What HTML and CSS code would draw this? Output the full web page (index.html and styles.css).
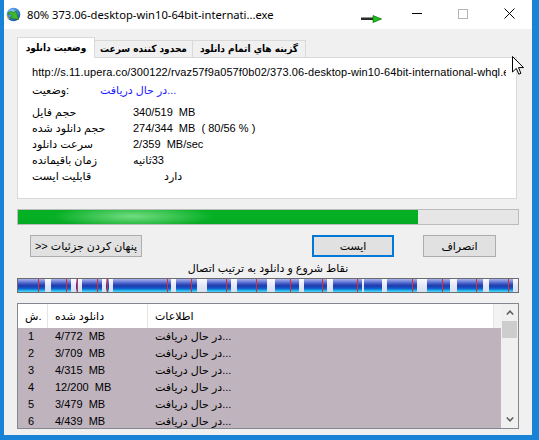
FILE: index.html
```html
<!DOCTYPE html>
<html>
<head>
<meta charset="utf-8">
<link rel="stylesheet" href="styles.css">
</head>
<body>
<div class="window">
  <div class="titlebar">
    <svg class="app-icon" viewBox="0 0 16 16" width="16" height="16">
      <defs>
        <radialGradient id="glb" cx="40%" cy="35%" r="70%">
          <stop offset="0" stop-color="#bfe4ff"/>
          <stop offset="0.5" stop-color="#3d8fe0"/>
          <stop offset="1" stop-color="#174c9e"/>
        </radialGradient>
      </defs>
      <circle cx="7.5" cy="7.5" r="6.8" fill="url(#glb)"/>
      <path d="M2.5 5.5 Q5 3.5 8 5.5 L10 3.8 L12.5 12.5 L4.2 11 L6.4 8.8 Q4.8 7.2 2.6 7.6 Z" fill="#41b82a" stroke="#1f7a12" stroke-width="0.7"/>
      <path d="M1.2 8.5 Q1.5 11 3 12" stroke="#f2a020" stroke-width="1.2" fill="none"/>
    </svg>
    <span class="title">80% 373.06-desktop-win10-64bit-internati...exe</span>
    <svg class="speed" viewBox="0 0 21 8" width="21" height="8">
      <rect x="0" y="2.5" width="14" height="2.5" fill="#2b2b2b"/>
      <polygon points="12,0.5 20.5,4 12,7.5" fill="#18c418" stroke="#0a6a0a" stroke-width="0.7"/>
    </svg>
    <div class="caps">
      <div class="cap"><svg width="10" height="1" viewBox="0 0 10 1"><rect width="10" height="1" fill="#000"/></svg></div>
      <div class="cap"><svg width="10" height="10" viewBox="0 0 10 10"><rect x="0.5" y="0.5" width="9" height="9" fill="none" stroke="#b4b4b4"/></svg></div>
      <div class="cap"><svg width="11" height="11" viewBox="0 0 11 11"><path d="M0.5 0.5 L10.5 10.5 M10.5 0.5 L0.5 10.5" stroke="#000" stroke-width="1"/></svg></div>
    </div>
  </div>

  <div class="client">
    <div class="tabs">
      <div class="tab active t1">وضعیت دانلود</div>
      <div class="tab t2">محدود کننده سرعت</div>
      <div class="tab t3">گزینه هاي اتمام دانلود</div>
    </div>
    <div class="panel">
      <div class="url">http://s.11.upera.co/300122/rvaz57f9a057f0b02/373.06-desktop-win10-64bit-international-whql.exe</div>
      <div class="status"><span class="slbl">وضعیت:</span><span class="sval">در حال دریافت...</span></div>
      <div class="info">
        <div class="lbl">حجم فایل</div><div class="val">340/519&nbsp; MB</div>
        <div class="lbl">حجم دانلود شده</div><div class="val">274/344&nbsp; MB&nbsp; ( 80/56 % )</div>
        <div class="lbl">سرعت دانلود</div><div class="val">2/359&nbsp; MB/sec</div>
        <div class="lbl">زمان باقیمانده</div><div class="val"><span dir="rtl">33ثانیه</span></div>
        <div class="lbl">قابلیت ایست</div><div class="val indent">دارد</div>
      </div>
    </div>

    <div class="progress"><div class="fill" style="width:400px"></div></div>

    <div class="buttons">
      <div class="btn b-hide">&gt;&gt; پنهان کردن جزئیات</div>
      <div class="btn b-stop">ایست</div>
      <div class="btn b-cancel">انصراف</div>
    </div>

    <div class="seglabel">نقاط شروع و دانلود به ترتیب اتصال</div>

    <div class="segbar">
      <i class="gap" style="left:27px;width:6px"></i>
      <i class="gap" style="left:53px;width:5px"></i>
      <i class="gap" style="left:59px;width:5px"></i>
      <i class="gap" style="left:84px;width:4px"></i>
      <i class="gap" style="left:91px;width:4px"></i>
      <i class="gap" style="left:153px;width:5px"></i>
      <i class="gap" style="left:179px;width:10px"></i>
      <i class="gap" style="left:213px;width:6px"></i>
      <i class="gap" style="left:249px;width:8px"></i>
      <i class="gap" style="left:281px;width:5px"></i>
      <i class="gap" style="left:309px;width:6px"></i>
      <i class="gap" style="left:344px;width:2px"></i>
      <i class="gap" style="left:364px;width:5px"></i>
      <i class="gap" style="left:399px;width:10px"></i>
      <i class="gap" style="left:432px;width:7px"></i>
      <i class="gap" style="left:465px;width:6px"></i>
      <i class="gap" style="left:495px;width:5px"></i>
      <i class="red" style="left:20px"></i>
      <i class="red" style="left:48px"></i>
      <i class="red" style="left:59px"></i>
      <i class="red" style="left:79px"></i>
      <i class="red" style="left:89px"></i>
      <i class="red" style="left:149px"></i>
      <i class="red" style="left:173px"></i>
      <i class="red" style="left:208px"></i>
      <i class="red" style="left:238px"></i>
      <i class="red" style="left:272px"></i>
      <i class="red" style="left:304px"></i>
      <i class="red" style="left:339px"></i>
      <i class="red" style="left:394px"></i>
      <i class="red" style="left:424px"></i>
      <i class="red" style="left:458px"></i>
      <i class="red" style="left:490px"></i>
    </div>

    <div class="list">
      <div class="list-main">
        <div class="lhead">
          <div class="c1 hc">ش.</div>
          <div class="c2 hc">دانلود شده</div>
          <div class="c3 hc">اطلاعات</div>
          <div class="hfill"></div>
        </div>
        <div class="lrow"><div class="c1">1</div><div class="c2">4/772&nbsp; MB</div><div class="c3">در حال دریافت...</div></div>
        <div class="lrow"><div class="c1">2</div><div class="c2">3/709&nbsp; MB</div><div class="c3">در حال دریافت...</div></div>
        <div class="lrow"><div class="c1">3</div><div class="c2">4/315&nbsp; MB</div><div class="c3">در حال دریافت...</div></div>
        <div class="lrow"><div class="c1">4</div><div class="c2">12/200&nbsp; MB</div><div class="c3">در حال دریافت...</div></div>
        <div class="lrow"><div class="c1">5</div><div class="c2">3/479&nbsp; MB</div><div class="c3">در حال دریافت...</div></div>
        <div class="lrow"><div class="c1">6</div><div class="c2">4/439&nbsp; MB</div><div class="c3">در حال دریافت...</div></div>
      </div>
      <div class="vscroll">
        <div class="sbtn"><svg width="8" height="5" viewBox="0 0 8 5"><polyline points="0.8,4.5 4,1.2 7.2,4.5" fill="none" stroke="#606060" stroke-width="1.6"/></svg></div>
        <div class="thumb"></div>
        <div class="strack"></div>
        <div class="sbtn"><svg width="8" height="5" viewBox="0 0 8 5"><polyline points="0.8,0.5 4,3.8 7.2,0.5" fill="none" stroke="#606060" stroke-width="1.6"/></svg></div>
      </div>
    </div>
  </div>
</div>
<svg class="cursor" width="12" height="19" viewBox="0 0 12 19">
  <path d="M0.5 0.5 L0.5 16 L4.3 12.4 L6.8 18.2 L8.9 17.3 L6.5 11.6 L11.5 11.6 Z" fill="#fff" stroke="#000" stroke-width="1"/>
</svg>
</body>
</html>
```
FILE: styles.css
```css
* { box-sizing: border-box; }
html, body { margin: 0; padding: 0; }
body {
  width: 539px;
  height: 440px;
  overflow: hidden;
  background: #1883d7;
  font-family: "Liberation Sans", "DejaVu Sans", sans-serif;
  font-size: 11px;
  color: #000;
  position: relative;
}
.window {
  margin-left: 4px;
  width: 528px;
  height: 435px;
  background: #f0f0f0;
}
.titlebar {
  height: 29px;
  background: #fff;
  display: flex;
  align-items: center;
}
.app-icon { margin-left: 2px; margin-right: 5px; flex: none; }
.title {
  font-family: "Noto Sans", sans-serif;
  font-size: 11.2px;
  white-space: nowrap;
  color: #000;
}
.speed { margin-left: auto; margin-right: 12px; align-self: flex-start; margin-top: 15px; flex: none; }
.caps { display: flex; align-self: flex-start; }
.cap { width: 46px; height: 27px; display: flex; align-items: center; justify-content: center; }

.client { padding: 8px 13px 0 13px; }
.tabs {
  display: flex;
  align-items: flex-end;
  height: 20px;
  position: relative;
  z-index: 1;
}
.tab {
  height: 17px;
  border: 1px solid #d9d9d9;
  border-left: none;
  border-bottom: none;
  background: #f0f0f0;
  font-family: "DejaVu Sans Condensed", "DejaVu Sans", sans-serif;
  font-size: 10px;
  font-weight: bold;
  display: flex;
  align-items: center;
  justify-content: center;
  white-space: nowrap;
  overflow: hidden;
  padding-bottom: 1px;
}
.tab.active {
  height: 21px;
  background: #fff;
  border-left: 1px solid #d9d9d9;
  margin-bottom: -1px;
  padding-bottom: 2px;
}
.t1 { width: 78px; }
.t2 { width: 98px; }
.t3 { width: 113px; }

.panel {
  height: 142px;
  margin-right: 2px;
  background: #fff;
  border: 1px solid #d9d9d9;
  padding: 6px 0 0 14px;
  overflow: hidden;
}
.url {
  width: 474px;
  height: 16px;
  line-height: 16px;
  white-space: nowrap;
  overflow: hidden;
  letter-spacing: 0.1px;
}
.status {
  display: flex;
  margin-top: 2px;
  height: 16px;
  line-height: 16px;
}
.slbl { width: 68px; }
.sval { color: #1a1aff; }
.info {
  margin-top: 6px;
  display: grid;
  grid-template-columns: 101px auto;
  grid-auto-rows: 16px;
  line-height: 16px;
}
.val { white-space: nowrap; }
.indent { padding-left: 31px; }

.progress {
  margin-top: 10px;
  height: 16px;
  border: 1px solid #bcbcbc;
  background: #e6e6e6;
}
.fill {
  height: 100%;
  background:
    radial-gradient(ellipse 80px 12px at 115px 45%, rgba(150,235,160,0.75), rgba(150,235,160,0) 100%),
    linear-gradient(#06b025, #06b025 55%, #05a823 100%);
}

.buttons {
  margin-top: 10px;
  height: 22px;
  display: flex;
}
.btn {
  height: 22px;
  background: #e1e1e1;
  border: 1px solid #adadad;
  display: flex;
  align-items: center;
  justify-content: center;
  white-space: nowrap;
}
.b-hide { margin-left: 13px; width: 112px; }
.b-stop { margin-left: 170px; width: 82px; border: 2px solid #0078d7; }
.b-cancel { margin-left: 29px; width: 73px; }

.seglabel {
  margin-top: 3px;
  height: 16px;
  line-height: 16px;
  text-align: center;
}

.segbar {
  margin-top: 2px;
  height: 15px;
  border: 1px solid #6b6b70;
  position: relative;
  overflow: hidden;
  background: linear-gradient(to bottom,
    #a9b2ea 0%, #7f8fe0 15%, #4d64cc 32%, #2340b0 48%,
    #1a44b8 60%, #0f66d0 75%, #1fb2ea 88%, #5fd6f6 100%);
}
.gap {
  position: absolute;
  top: 0;
  bottom: 0;
  background: linear-gradient(#fafbff, #e4e8f6 50%, #d8deef);
}
.red {
  position: absolute;
  top: 0;
  bottom: 0;
  width: 1px;
  background: #e8281e;
}

.list {
  margin-top: 10px;
  height: 126px;
  border: 1px solid #828790;
  display: flex;
  overflow: hidden;
  background: #fff;
}
.list-main { width: 483px; overflow: hidden; }
.lhead {
  display: flex;
  height: 24px;
  line-height: 24px;
  background: #fff;
}
.lhead .hc { border-right: 1px solid #e5e5e5; padding-left: 7px; }
.hfill { width: 7px; background: #f3f3f3; }
.c1 { width: 30px; flex: none; white-space: nowrap; }
.c2 { width: 100px; flex: none; white-space: nowrap; padding-left: 7px; }
.c3 { width: 346px; flex: none; white-space: nowrap; padding-left: 7px; }
.lrow {
  display: flex;
  height: 17px;
  line-height: 17px;
  background: #bfb3bd;
}
.lrow .c1 { padding-left: 10px; }
.vscroll {
  width: 17px;
  background: #f0f0f0;
  display: flex;
  flex-direction: column;
}
.sbtn { height: 17px; display: flex; align-items: center; justify-content: center; }
.thumb { height: 17px; margin: 0 1px; background: #cdcdcd; }
.strack { flex: 1; }

.cursor {
  position: absolute;
  left: 512px;
  top: 56px;
}
```
